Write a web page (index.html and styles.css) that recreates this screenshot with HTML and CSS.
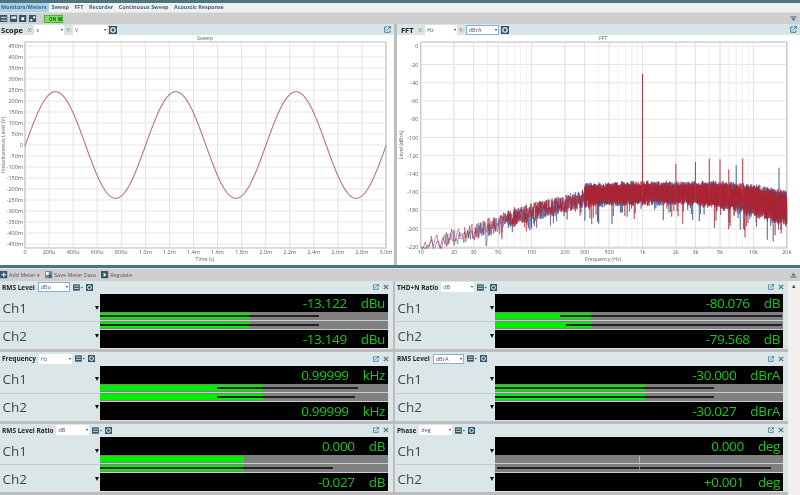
FILE: index.html
```html
<!DOCTYPE html>
<html lang="en">
<head>
    <meta charset="UTF-8">
    <title>Monitors/Meters</title>
    <link rel="stylesheet" href="styles.css">
</head>
<body>
    <svg class="defs" width="0" height="0">
        <symbol id="i-gear" viewBox="0 0 8 8"><rect width="8" height="8" fill="#34596b"/><circle cx="4" cy="4" r="2.2" fill="none" stroke="#fff" stroke-width="1.1"/></symbol>
        <symbol id="i-pop" viewBox="0 0 7 7"><path d="M3 1H.7v5.3H6V4" fill="none" stroke="#3f7fa8" stroke-width="1"/><path d="M2.6 4.4 6.2.8M4 .6h2.4V3" fill="none" stroke="#3f7fa8" stroke-width="1"/></symbol>
        <symbol id="i-close" viewBox="0 0 6 6"><path d="M.8.8 5.2 5.2M5.2.8.8 5.2" stroke="#4d6f80" stroke-width="1.1"/></symbol>
        <symbol id="i-view" viewBox="0 0 11 7"><rect width="7.5" height="7" fill="#34596b"/><path d="M1 2h5.500M1 4.500h5.500" stroke="#dfe8ea" stroke-width=".9"/><path d="M8.500 3h2.500L9.750 4.500z" fill="#34596b"/></symbol>
        <symbol id="i-save" viewBox="0 0 8 8"><rect width="8" height="8" fill="#34596b"/><path d="M1 2.500h6M1 5.500h6" stroke="#dfe8ea" stroke-width="1"/></symbol>
        <symbol id="i-panel" viewBox="0 0 8 8"><rect width="8" height="8" fill="#34596b"/><rect x="1.500" y="1.500" width="5" height="2.500" fill="#dfe8ea"/></symbol>
        <symbol id="i-box" viewBox="0 0 8 8"><rect width="8" height="8" fill="#34596b"/><rect x="2.500" y="2.500" width="3" height="3" fill="#fff"/></symbol>
        <symbol id="i-nodes" viewBox="0 0 8 8"><rect width="8" height="8" fill="#34596b"/><circle cx="2.500" cy="5.500" r="1.200" fill="#fff"/><circle cx="5.500" cy="2.500" r="1.200" fill="#fff"/></symbol>
        <symbol id="i-add" viewBox="0 0 8 8"><rect width="8" height="8" fill="#34596b"/><path d="M4 1.500v5M1.500 4h5" stroke="#fff" stroke-width="1.100"/></symbol>
        <symbol id="i-data" viewBox="0 0 8 8"><rect width="8" height="8" fill="#6f8c9a"/><rect x="1" y="1" width="3" height="3" fill="#fff"/><rect x="4" y="4" width="3" height="3" fill="#34596b"/></symbol>
        <symbol id="i-play" viewBox="0 0 8 8"><rect width="8" height="8" fill="#34596b"/><path d="M2.800 1.800 5.800 4 2.800 6.200z" fill="#fff"/></symbol>
        <symbol id="i-fold" viewBox="0 0 7 6"><path d="M.5 1h6" stroke="#3f6678" stroke-width="1"/><path d="M1.500 2.500h4L3.500 5z" fill="#3f6678"/></symbol>
        <symbol id="i-unfold" viewBox="0 0 7 6"><path d="M.5 5h6" stroke="#3f6678" stroke-width="1"/><path d="M1.500 3.500h4L3.500 1z" fill="#3f6678"/></symbol>
    </svg>

    <div class="screen">
        <div class="topline"></div>
        <nav class="tabs">
            <span class="tab active">Monitors/Meters</span>
            <span class="tab">Sweep</span>
            <span class="tab">FFT</span>
            <span class="tab">Recorder</span>
            <span class="tab">Continuous Sweep</span>
            <span class="tab">Acoustic Response</span>
        </nav>
        <div class="toolbar">
            <svg class="icon8"><use href="#i-save"/></svg>
            <svg class="icon8"><use href="#i-panel"/></svg>
            <svg class="icon8"><use href="#i-box"/></svg>
            <svg class="icon8"><use href="#i-nodes"/></svg>
            <span class="on-btn">ON<i></i></span>
            <svg class="fold"><use href="#i-fold"/></svg>
        </div>

        <div class="charts">
            <section class="chart scope">
                <header class="chart-head">
                    <span class="chart-name">Scope</span>
                    <span class="axis-label">X:</span>
                    <span class="select w-30">s<i></i></span>
                    <span class="axis-label">Y:</span>
                    <span class="select w-34">V<i></i></span>
                    <svg class="icon8"><use href="#i-gear"/></svg>
                    <svg class="pop"><use href="#i-pop"/></svg>
                </header>
                <svg id="scope" class="plot" width="394" height="230"></svg>
            </section>
            <section class="chart fft">
                <header class="chart-head">
                    <span class="chart-name">FFT</span>
                    <span class="axis-label">X:</span>
                    <span class="select w-32">Hz<i></i></span>
                    <span class="axis-label">Y:</span>
                    <span class="select focus w-33">dBrA<i></i></span>
                    <svg class="icon8"><use href="#i-gear"/></svg>
                    <svg class="pop"><use href="#i-pop"/></svg>
                </header>
                <svg id="fft" class="plot" width="403" height="230"></svg>
            </section>
        </div>
        <div class="split"></div>

        <div class="toolbar meter-bar">
            <svg class="icon8"><use href="#i-add"/></svg>
            <span class="tool">Add Meter &#9662;</span>
            <svg class="icon8"><use href="#i-data"/></svg>
            <span class="tool">Save Meter Data</span>
            <svg class="icon8"><use href="#i-play"/></svg>
            <span class="tool">Regulate</span>
            <svg class="fold"><use href="#i-unfold"/></svg>
        </div>

        <div class="meter-area">
            <div class="meters">
                <section class="meter">
                    <header class="meter-head">
                        <span class="meter-name">RMS Level</span>
                        <span class="select focus w-31">dBu<i></i></span>
                        <svg class="view"><use href="#i-view"/></svg>
                        <svg class="gear"><use href="#i-gear"/></svg>
                        <svg class="pop"><use href="#i-pop"/></svg>
                        <svg class="close"><use href="#i-close"/></svg>
                    </header>
                    <div class="meter-body">
                        <div class="channels">
                            <div class="channel">Ch1</div>
                            <div class="channel">Ch2</div>
                        </div>
                        <div class="readouts">
                            <div class="readout"><span>-13.122</span><span>dBu</span></div>
                            <div class="track"><div class="fill" style="width:52.2%"></div><div class="peak" style="left:0;width:76.2%"></div></div>
                            <div class="track"><div class="fill" style="width:52.2%"></div><div class="peak" style="left:0;width:76.2%"></div></div>
                            <div class="readout"><span>-13.149</span><span>dBu</span></div>
                        </div>
                    </div>
                </section>

                <section class="meter">
                    <header class="meter-head">
                        <span class="meter-name">THD+N Ratio</span>
                        <span class="select w-33">dB<i></i></span>
                        <svg class="view"><use href="#i-view"/></svg>
                        <svg class="gear"><use href="#i-gear"/></svg>
                        <svg class="pop"><use href="#i-pop"/></svg>
                        <svg class="close"><use href="#i-close"/></svg>
                    </header>
                    <div class="meter-body">
                        <div class="channels">
                            <div class="channel">Ch1</div>
                            <div class="channel">Ch2</div>
                        </div>
                        <div class="readouts">
                            <div class="readout"><span>-80.076</span><span>dB</span></div>
                            <div class="track"><div class="fill" style="width:33.5%"></div><div class="peak" style="left:22.8%;width:76.9%"></div></div>
                            <div class="track"><div class="fill" style="width:33.8%"></div><div class="peak" style="left:24.8%;width:74.9%"></div></div>
                            <div class="readout"><span>-79.568</span><span>dB</span></div>
                        </div>
                    </div>
                </section>

                <section class="meter">
                    <header class="meter-head">
                        <span class="meter-name">Frequency</span>
                        <span class="select w-33">Hz<i></i></span>
                        <svg class="view"><use href="#i-view"/></svg>
                        <svg class="gear"><use href="#i-gear"/></svg>
                        <svg class="pop"><use href="#i-pop"/></svg>
                        <svg class="close"><use href="#i-close"/></svg>
                    </header>
                    <div class="meter-body">
                        <div class="channels">
                            <div class="channel">Ch1</div>
                            <div class="channel">Ch2</div>
                        </div>
                        <div class="readouts">
                            <div class="readout"><span>0.99999</span><span>kHz</span></div>
                            <div class="track"><div class="fill" style="width:56.7%"></div><div class="peak" style="left:40.8%;width:48.8%"></div></div>
                            <div class="track"><div class="fill" style="width:56.7%"></div><div class="peak" style="left:40.8%;width:47.9%"></div></div>
                            <div class="readout"><span>0.99999</span><span>kHz</span></div>
                        </div>
                    </div>
                </section>

                <section class="meter">
                    <header class="meter-head">
                        <span class="meter-name">RMS Level</span>
                        <span class="select focus w-28">dBrA<i></i></span>
                        <svg class="view"><use href="#i-view"/></svg>
                        <svg class="gear"><use href="#i-gear"/></svg>
                        <svg class="pop"><use href="#i-pop"/></svg>
                        <svg class="close"><use href="#i-close"/></svg>
                    </header>
                    <div class="meter-body">
                        <div class="channels">
                            <div class="channel">Ch1</div>
                            <div class="channel">Ch2</div>
                        </div>
                        <div class="readouts">
                            <div class="readout"><span>-30.000</span><span>dBrA</span></div>
                            <div class="track"><div class="fill" style="width:52.3%"></div><div class="peak" style="left:0;width:76.2%"></div></div>
                            <div class="track"><div class="fill" style="width:52.3%"></div><div class="peak" style="left:0;width:76.2%"></div></div>
                            <div class="readout"><span>-30.027</span><span>dBrA</span></div>
                        </div>
                    </div>
                </section>

                <section class="meter">
                    <header class="meter-head">
                        <span class="meter-name">RMS Level Ratio</span>
                        <span class="select w-33">dB<i></i></span>
                        <svg class="view"><use href="#i-view"/></svg>
                        <svg class="gear"><use href="#i-gear"/></svg>
                        <svg class="pop"><use href="#i-pop"/></svg>
                        <svg class="close"><use href="#i-close"/></svg>
                    </header>
                    <div class="meter-body">
                        <div class="channels">
                            <div class="channel">Ch1</div>
                            <div class="channel">Ch2</div>
                        </div>
                        <div class="readouts">
                            <div class="readout"><span>0.000</span><span>dB</span></div>
                            <div class="track"><div class="fill" style="width:50%"></div></div>
                            <div class="track"><div class="fill" style="width:50%"></div><div class="peak" style="left:0;width:81%"></div></div>
                            <div class="readout"><span>-0.027</span><span>dB</span></div>
                        </div>
                    </div>
                </section>

                <section class="meter">
                    <header class="meter-head">
                        <span class="meter-name">Phase</span>
                        <span class="select w-33">deg<i></i></span>
                        <svg class="view"><use href="#i-view"/></svg>
                        <svg class="gear"><use href="#i-gear"/></svg>
                        <svg class="pop"><use href="#i-pop"/></svg>
                        <svg class="close"><use href="#i-close"/></svg>
                    </header>
                    <div class="meter-body">
                        <div class="channels">
                            <div class="channel">Ch1</div>
                            <div class="channel">Ch2</div>
                        </div>
                        <div class="readouts">
                            <div class="readout"><span>0.000</span><span>deg</span></div>
                            <div class="track"><div class="tick" style="left:50%"></div></div>
                            <div class="track"><div class="peak" style="left:1%;width:95%"></div><div class="tick green" style="left:50%"></div></div>
                            <div class="readout"><span>+0.001</span><span>deg</span></div>
                        </div>
                    </div>
                </section>
            </div>
            <div class="scrollbar"><span>&#9652;</span></div>
        </div>
    </div>
    <script src="charts.js"></script>
</body>
</html>
```

FILE: styles.css
```css
* {margin: 0; padding: 0; box-sizing: border-box;}
html, body {width: 800px; height: 495px; overflow: hidden; background: #cfcfcf;}
body {font-family: "Open Sans", "Noto Sans", sans-serif; color: #333;}
.defs {display: block; height: 0;}
.screen {
width: 800px;
height: 495px;
display: flex;
flex-direction: column;
filter: blur(0.45px);
}
.topline {height: 3px; background: #4a7681;}
.tabs {
height: 9px;
display: flex;
align-items: center;
gap: 5.5px;
background: #f0f0f0;
}
.tab {font-size: 5.400px; font-weight: 700; line-height: 9px; color: #3f6678; white-space: nowrap;}
.tab.active {width: 49px; padding-left: 1px; background: #a9d0ea; margin-right: -3px;}
.toolbar {
height: 12px;
display: flex;
align-items: center;
gap: 2px;
background: #cfcfcf;
border-top: 1px solid #e2e2e2;
}
.toolbar > .icon8 {width: 7.5px; height: 7.5px;}
.fold {width: 7px; height: 6px; margin-left: auto; margin-right: 3px;}
.on-btn {
display: flex;
align-items: center;
gap: 2px;
width: 19px;
height: 8px;
margin-left: 6px;
padding-left: 4px;
background: #7be05a;
border: 1px solid #54b03c;
font-size: 4.5px;
font-weight: 700;
color: #24601c;
}
.on-btn i {width: 5px; height: 4px; background: #2f8f2a;}

.charts {display: flex; height: 241px; justify-content: space-between; background: #bdbdbd;}
.chart {display: flex; flex-direction: column; background: #fff;}
.chart.scope {width: 394px;}
.chart.fft {width: 403px;}
.chart-head {
height: 11px;
display: flex;
align-items: center;
gap: 2px;
padding-left: 1px;
background: #d9e4e6;
}
.chart-name {font-size: 7.500px; font-weight: 700; color: #222; margin-right: 3px;}
.fft .chart-name {margin-left: 3px;}
.axis-label {font-size: 5.500px; color: #777;}
.chart-head .icon8 {width: 8px; height: 8px;}
.pop {width: 7px; height: 7px; margin-left: auto; margin-right: 3px;}
.plot {display: block; background: #fff;}
.plot text {font-family: "Open Sans", "Noto Sans", sans-serif; font-size: 5.500px; fill: #5d5d5d;}
.plot .axis-title {font-size: 5.200px;}
.split {height: 3px; background: #4a7681; flex: none;}

.select {
position: relative;
height: 10px;
padding-left: 2px;
background: #fff;
font-size: 5.500px;
line-height: 10px;
color: #555;
}
.select i {
position: absolute;
right: 1px;
top: 4px;
border: 1.500px solid transparent;
border-top: 2px solid #333;
border-bottom: 0;
}
.select.focus {border: 1px solid #7db4e0; line-height: 8px;}
.select.focus i {top: 3px;}
.w-28 {width: 31px;}
.w-30 {width: 30px;}
.w-31 {width: 32px;}
.w-32 {width: 32px;}
.w-33 {width: 33px;}
.w-34 {width: 34px;}

.meter-bar {height: 12.500px; gap: 1.500px; flex: none;}
.tool {font-size: 5.400px; color: #555; margin-right: 4px; white-space: nowrap;}

.meter-area {flex: 1; display: flex; min-height: 0; background: #bcbcbc;}
.meters {
width: 788px;
display: grid;
grid-template-columns: 393px 393px;
grid-template-rows: repeat(3, 1fr);
gap: 3px 2px;
padding-bottom: 3px;
}
.scrollbar {flex: 1; background: #f0f0f0; text-align: center; font-size: 7px; line-height: 9px; color: #555;}
.meter {display: flex; flex-direction: column; background: #dbe6e8;}
.meter-head {
height: 13.500px;
display: flex;
align-items: center;
padding-left: 2px;
flex: none;
}
.meter-name {font-size: 6.500px; font-weight: 700; color: #222; margin-right: 3px; white-space: nowrap;}
.view {width: 10px; height: 7px; margin-left: 3px;}
.gear {width: 7px; height: 7px; margin-left: 3px;}
.meter-head .pop {width: 6px; height: 6px; margin-right: 4px;}
.close {width: 6px; height: 6px; margin-right: 4px;}

.meter-body {flex: 1; display: flex; min-height: 0;}
.channels {width: 99.500px; display: flex; flex-direction: column;}
.channel {
position: relative;
flex: 1;
display: flex;
align-items: center;
padding-left: 2.500px;
font-size: 13.500px;
color: #444;
}
.channel + .channel {border-top: 1px solid #c3cdd0;}
.channel::after {
content: "";
position: absolute;
right: 1px;
top: 50%;
margin-top: -2px;
border: 2.500px solid transparent;
border-top: 4.500px solid #111;
border-bottom: 0;
}
.readouts {width: 288.500px; display: flex; flex-direction: column;}
.readout {
height: 18px;
display: flex;
justify-content: flex-end;
align-items: center;
gap: 14px;
padding-right: 3px;
background: #000;
font-size: 13.500px;
letter-spacing: -0.35px;
line-height: 18px;
color: #14c814;
}
.track {
position: relative;
height: 9px;
padding: 1px 0 1px;
background: #808080;
border-bottom: 1px solid #c8cdd0;
}
.fill {height: 100%; background: #00ee00;}
.peak {position: absolute; top: 3px; height: 2px; background: #222;}
.tick {position: absolute; top: 1px; width: 1px; height: 7px; background: #b5b5b5;}
.tick.green {background: #5fb05f;}
```

FILE: charts.js
```js
var NS = 'http://www.w3.org/2000/svg';

function add(svg, tag, attrs, text) {
    var el = document.createElementNS(NS, tag);
    for (var k in attrs) el.setAttribute(k, attrs[k]);
    if (text !== undefined) el.textContent = text;
    svg.appendChild(el);
    return el;
}

function line(svg, x1, y1, x2, y2, color, w) {
    add(svg, 'line', {x1: x1, y1: y1, x2: x2, y2: y2, stroke: color, 'stroke-width': w || 1});
}

// simple seeded random so the noise comes out the same every run
var seed = 12345;
function rnd() {
    seed = (seed * 1664525 + 1013904223) % 4294967296;
    return seed / 4294967296;
}

// ---- Scope ----
function drawScope() {
    var svg = document.getElementById('scope');
    var left = 25, right = 386, top = 7, bottom = 213;
    var zero = 110, perStep = 11;
    add(svg, 'text', {x: 205, y: 5, 'text-anchor': 'middle', 'class': 'axis-title'}, 'Sweep');

    for (var i = -9; i <= 9; i++) {
        var y = zero - i * perStep;
        line(svg, left, y, right, y, '#e6e6e6');
        add(svg, 'text', {x: 23, y: y + 2, 'text-anchor': 'end'}, i == 0 ? '0' : (i * 50) + 'm');
    }
    var labels = ['0', '200u', '400u', '600u', '800u', '1.0m', '1.2m', '1.4m', '1.6m', '1.8m', '2.0m', '2.2m', '2.4m', '2.6m', '2.8m', '3.0m'];
    for (var j = 0; j < labels.length; j++) {
        var x = left + j * (right - left) / 15;
        line(svg, x, top, x, bottom, '#e3e3e3');
        add(svg, 'text', {x: x, y: 219, 'text-anchor': 'middle'}, labels[j]);
    }
    add(svg, 'rect', {x: left, y: top, width: right - left, height: bottom - top, fill: 'none', stroke: '#c6c6c6', 'stroke-width': 1.2});
    add(svg, 'text', {x: 205, y: 225.500, 'text-anchor': 'middle', 'class': 'axis-title'}, 'Time (s)');
    add(svg, 'text', {x: 5, y: 110, 'text-anchor': 'middle', transform: 'rotate(-90 5 110)', 'class': 'axis-title'}, 'Instantaneous Level (V)');

    var d = '';
    for (var px = 0; px <= right - left; px += 0.5) {
        var v = Math.sin(px / 120.3 * 2 * Math.PI - 0.02);
        d += (px == 0 ? 'M' : 'L') + (left + px) + ' ' + (zero - v * 53.3).toFixed(2);
    }
    add(svg, 'path', {d: d, fill: 'none', stroke: '#b8727f', 'stroke-width': 1.1});
}

// ---- FFT ----
var X0 = 23.7, DECADE = 110.9;
function fx(f) { return X0 + (Math.log(f / 10) / Math.LN10) * DECADE; }
function fy(db) { return 11.300 - db * 0.912; }

var envelope = [[10, -208], [15, -203], [20, -197], [30, -191], [50, -183], [70, -174], [100, -170], [200, -161], [290, -155], [310, -149], [1000, -147], [5000, -147], [10000, -150], [20000, -157]];
function upper(f) {
    for (var i = 1; i < envelope.length; i++) {
        if (f <= envelope[i][0]) {
            var a = envelope[i - 1], b = envelope[i];
            var t = Math.log(f / a[0]) / Math.log(b[0] / a[0]);
            return a[1] + (b[1] - a[1]) * t;
        }
    }
    return -157;
}

function noisePath() {
    var d = '', f = 10, first = true;
    while (f <= 20000) {
        var r = rnd(), db;
        if (f < 300) {
            db = upper(f) - 2 - 20 * r;
            if (rnd() < 0.06) db -= 10;
        } else {
            var depth = 24 + 14 * Math.max(0, Math.log(f / 3000) / Math.log(20000 / 3000));
            db = upper(f) - 5 * rnd() - depth * Math.pow(r, 1.15);
            if (rnd() < 0.02) db -= 16 + 12 * rnd();
        }
        db = Math.max(db, -222);
        d += (first ? 'M' : 'L') + fx(f).toFixed(1) + ' ' + fy(db).toFixed(1);
        first = false;
        if (f < 60) f += Math.max(f * 0.012, 0.5);
        else if (f < 300) f += f * 0.005;
        else f += f * 0.0016;
    }
    return d;
}

function spurPath(spurs) {
    var d = '';
    for (var i = 0; i < spurs.length; i++) {
        var x = fx(spurs[i][0]).toFixed(1);
        d += 'M' + x + ' ' + fy(-165).toFixed(1) + 'L' + x + ' ' + fy(spurs[i][1]).toFixed(1);
    }
    return d;
}

function drawFft() {
    var svg = document.getElementById('fft');
    var top = 7, bottom = 213;
    var right = fx(20000);
    add(svg, 'text', {x: 206, y: 5, 'text-anchor': 'middle', 'class': 'axis-title'}, 'FFT');

    for (var db = 0; db >= -220; db -= 20) {
        line(svg, X0, fy(db), right, fy(db), '#e6e6e6');
        add(svg, 'text', {x: 21.500, y: fy(db) + 2, 'text-anchor': 'end'}, db);
    }
    for (var dec = 10; dec <= 10000; dec *= 10) {
        for (var m = 2; m <= 9; m++) {
            if (dec * m > 20000) break;
            line(svg, fx(dec * m), top, fx(dec * m), bottom, '#f0f0f0');
        }
    }
    var ticks = [[10, '10'], [20, '20'], [30, '30'], [50, '50'], [100, '100'], [200, '200'], [300, '300'], [500, '500'], [1000, '1k'], [2000, '2k'], [3000, '3k'], [5000, '5k'], [10000, '10k'], [20000, '20k']];
    for (var i = 0; i < ticks.length; i++) {
        var x = fx(ticks[i][0]);
        line(svg, x, top, x, bottom, '#e2e2e2');
        add(svg, 'text', {x: x, y: 219, 'text-anchor': 'middle'}, ticks[i][1]);
    }
    add(svg, 'rect', {x: X0, y: top, width: right - X0, height: bottom - top, fill: 'none', stroke: '#c6c6c6', 'stroke-width': 1.2});
    add(svg, 'text', {x: 206, y: 225.500, 'text-anchor': 'middle', 'class': 'axis-title'}, 'Frequency (Hz)');
    add(svg, 'text', {x: 6, y: 110, 'text-anchor': 'middle', transform: 'rotate(-90 6 110)', 'class': 'axis-title'}, 'Level (dBrA)');

    add(svg, 'path', {d: noisePath(), fill: 'none', stroke: '#3f5f9e', 'stroke-width': 0.7, opacity: 0.9});
    add(svg, 'path', {d: spurPath([[7000, -130], [17000, -133]]), fill: 'none', stroke: '#3f5f9e', 'stroke-width': 1});
    add(svg, 'path', {d: noisePath(), fill: 'none', stroke: '#ad2433', 'stroke-width': 0.7, opacity: 0.78});
    add(svg, 'path', {d: spurPath([[1000, -30], [2000, -129], [3000, -127], [4000, -123], [5000, -124], [6000, -135], [8000, -123]]), fill: 'none', stroke: '#b8323f', 'stroke-width': 1});
}

drawScope();
drawFft();
```
